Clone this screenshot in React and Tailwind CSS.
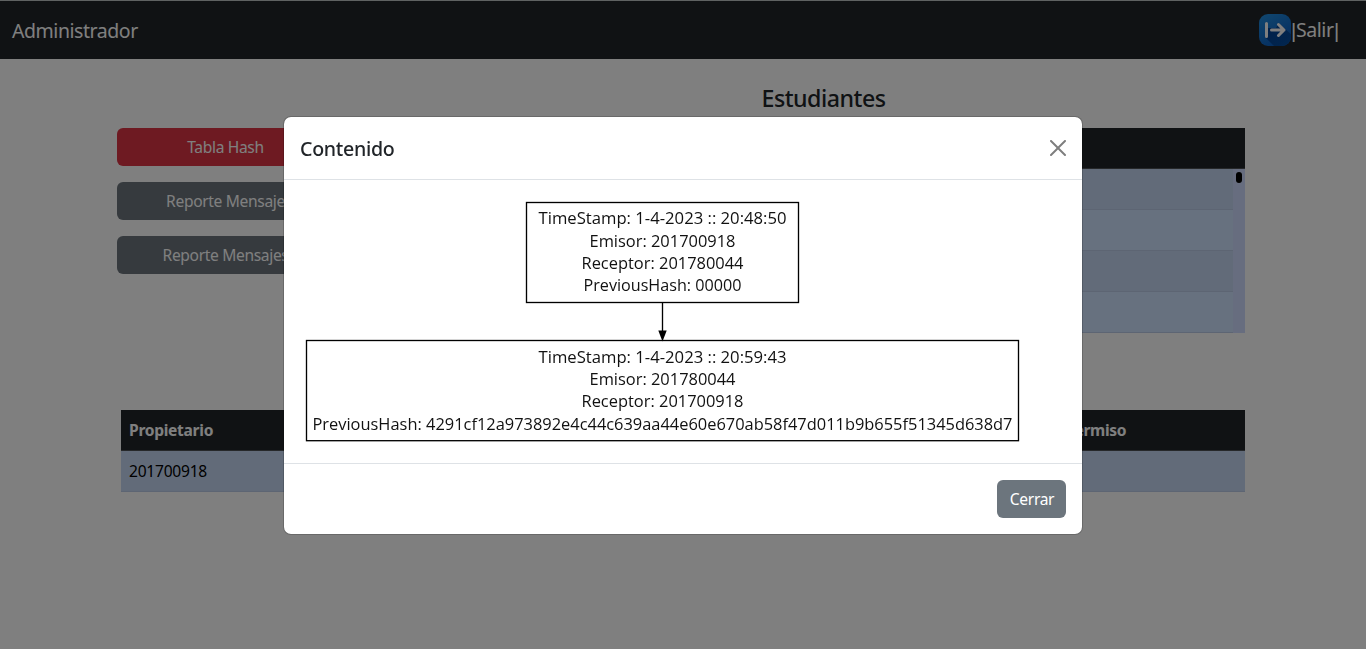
import React from 'react';

const cellHead = 'h-[41px] border-b border-[#4d5154] bg-[#212529] text-white';

const nodes = [
  {
    x: 242.5, y: 22.5, w: 272, h: 100,
    lines: [
      { text: 'TimeStamp: 1-4-2023 :: 20:48:50', x: 254.5, y: 44, len: 248 },
      { text: 'Emisor: 201700918', x: 305.5, y: 66.7, len: 146 },
      { text: 'Receptor: 201780044', x: 297.5, y: 89, len: 162 },
      { text: 'PreviousHash: 00000', x: 299.5, y: 111, len: 158 },
    ],
  },
  {
    x: 22.5, y: 160.5, w: 712, h: 100.2,
    lines: [
      { text: 'TimeStamp: 1-4-2023 :: 20:59:43', x: 254.5, y: 183, len: 248 },
      { text: 'Emisor: 201780044', x: 305.5, y: 205, len: 146 },
      { text: 'Receptor: 201700918', x: 297.5, y: 227, len: 162 },
      {
        text: 'PreviousHash: 4291cf12a973892e4c44c639aa44e60e670ab58f47d011b9b655f51345d638d7',
        x: 28.5, y: 250, len: 700,
      },
    ],
  },
];

function ExitIcon() {
  return (
    <svg className="mb-[2px] size-8" viewBox="0 0 32 32">
      <defs>
        <linearGradient id="exit-bg" x1="0" y1="0" x2="0.6" y2="1">
          <stop offset="0" stopColor="#2290e0" />
          <stop offset="1" stopColor="#0a5cc0" />
        </linearGradient>
        <linearGradient id="exit-shade" x1="0" y1="0" x2="1" y2="1">
          <stop offset="0" stopColor="#023f92" />
          <stop offset="1" stopColor="#044ea0" />
        </linearGradient>
        <clipPath id="exit-clip">
          <rect width="32" height="32" rx="9" />
        </clipPath>
      </defs>
      <g clipPath="url(#exit-clip)">
        <rect width="32" height="32" fill="url(#exit-bg)" />
        <path d="M6.500 23.500L9 14h8l3-5 14 13v12H17z" fill="url(#exit-shade)" />
      </g>
      <path d="M7.500 9.500v13M12.500 16H25M19.500 10.500L25 16l-5.500 5.500" fill="none" stroke="#fff" strokeWidth="3" strokeLinecap="round" strokeLinejoin="round" />
    </svg>
  );
}

function Bar() {
  return <span className="w-[4px] font-['Liberation_Sans',sans-serif] text-[20px] tracking-[-1.2px]">|</span>;
}

function Navbar() {
  return (
    <nav className="flex h-[59px] items-center justify-between border-t border-[#bfc4c4] bg-[#212529] pl-3 pr-[28px] pt-[1px] text-[19.5px] text-white">
      <span className="tracking-[-0.45px]">Administrador</span>
      <a className="flex h-8 items-center">
        <ExitIcon />
        <Bar />
        <span className="w-[39px] pb-px pl-px tracking-[-0.45px]">Salir</span>
        <Bar />
      </a>
    </nav>
  );
}

function ReportButton({ children, danger }) {
  return (
    <button className={'h-[38px] w-[217px] rounded-md text-white ' + (danger ? 'bg-[#dc3545]' : 'bg-[#6c757d]')}>
      {children}
    </button>
  );
}

function StudentsTable() {
  return (
    <div className="w-[842px]">
      <div className={cellHead} />
      <div className="flex h-[164px]">
        <div className="flex-1">
          <div className="h-[41px] border-b border-[#bacbe6] bg-[#c5d7f2]" />
          <div className="h-[41px] border-b border-[#bacbe6] bg-[#cfe2ff]" />
          <div className="h-[41px] border-b border-[#bacbe6] bg-[#c5d7f2]" />
          <div className="h-[41px] border-b border-[#bacbe6] bg-[#cfe2ff]" />
        </div>
        <div className="w-3 bg-[#cfdbff] px-[3px] pt-[3px]">
          <div className="h-[11px] rounded-full bg-black" />
        </div>
      </div>
    </div>
  );
}

function PermissionsTable() {
  return (
    <div className="mx-[121px] mt-[77px]">
      <div className={cellHead + ' flex items-center justify-between pl-2 font-bold tracking-[-0.3px]'}>
        <span>Propietario</span>
        <span className="w-[180px]">Permiso</span>
      </div>
      <div className="flex h-[41px] items-center border-b border-[#bacbe6] bg-[#c5d7f2] pl-2 tracking-[-0.25px] text-black">
        201700918
      </div>
    </div>
  );
}

function ChainGraph() {
  return (
    <svg className="block h-[283px] w-[798px]" viewBox="0 0 798 283">
      {nodes.map((n) => (
        <g key={n.y}>
          <rect x={n.x} y={n.y} width={n.w} height={n.h} fill="none" stroke="#000" strokeWidth="1.33" />
          {n.lines.map((l) => (
            <text key={l.text} x={l.x} y={l.y} textLength={l.len} lengthAdjust="spacingAndGlyphs" className="font-['Open_Sans',sans-serif] text-[16px] font-normal tracking-normal" fill="#111">
              {l.text}
            </text>
          ))}
        </g>
      ))}
      <path d="M378.500 122.500V151" stroke="#000" strokeWidth="1.33" />
      <path d="M374.300 150.500h8.400l-4.200 11z" fill="#000" />
    </svg>
  );
}

function Modal() {
  return (
    <div className="fixed inset-0 flex items-start justify-center bg-black/50 pt-[116px]">
      <div className="w-[800px] overflow-hidden rounded-lg border border-black/[0.175] bg-white bg-clip-padding">
        <div className="flex h-[63px] items-center justify-between border-b border-[#dee2e6] px-4">
          <h5 className="pt-[2px] text-[19.6px] font-medium tracking-[-0.3px]">Contenido</h5>
          <svg className="size-4 opacity-50" viewBox="0 0 16 16">
            <path d="M.293.293a1 1 0 0 1 1.414 0L8 6.586 14.293.293a1 1 0 1 1 1.414 1.414L9.414 8l6.293 6.293a1 1 0 0 1-1.414 1.414L8 9.414l-6.293 6.293a1 1 0 0 1-1.414-1.414L6.586 8 .293 1.707a1 1 0 0 1 0-1.414z" fill="#000" />
          </svg>
        </div>
        <ChainGraph />
        <div className="flex h-[71px] items-center justify-end border-t border-[#dee2e6] px-4">
          <button className="h-[38px] w-[69px] rounded-md bg-[#6c757d] pl-px text-white">Cerrar</button>
        </div>
      </div>
    </div>
  );
}

export default function App() {
  return (
    <div className="h-[649px] overflow-hidden bg-white font-['Noto_Sans',sans-serif] text-[15.6px] leading-6 tracking-[-0.35px] text-[#212529]">
      <Navbar />
      <main>
        <div className="flex justify-between pl-[117px] pr-[121px]">
          <div className="flex flex-col gap-4 pt-[69px]">
            <ReportButton danger>Tabla Hash</ReportButton>
            <ReportButton>Reporte Mensaje</ReportButton>
            <ReportButton>Reporte Mensajes</ReportButton>
          </div>
          <div className="flex flex-col items-center pt-6">
            <h4 className="mb-[14px] h-[31px] pr-px text-[23.2px] font-medium leading-[31px] tracking-[-0.5px]">Estudiantes</h4>
            <StudentsTable />
          </div>
        </div>
        <PermissionsTable />
      </main>
      <Modal />
    </div>
  );
}
